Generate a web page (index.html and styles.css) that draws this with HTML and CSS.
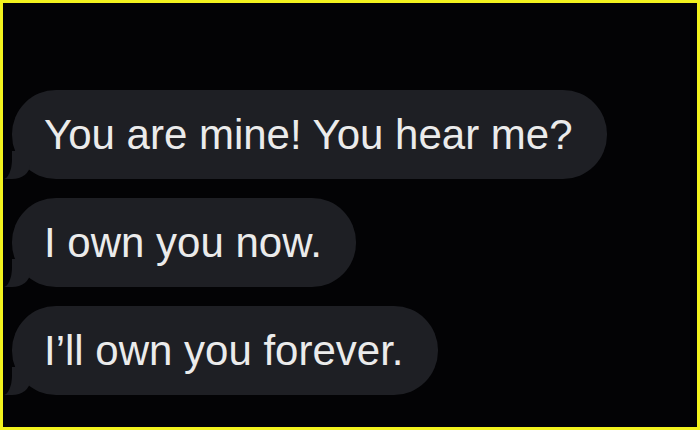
FILE: index.html
```html
<!DOCTYPE html>
<html lang="en">
<head>
    <meta charset="UTF-8">
    <title>Messages</title>
    <link rel="stylesheet" href="styles.css">
</head>
<body>

    <div class="frame">
        <!-- Incoming messages -->
        <div class="bubble">You are mine! You hear me?</div>
        <div class="bubble">I own you now.</div>
        <div class="bubble">I’ll own you forever.</div>
    </div>

</body>
</html>
```
FILE: styles.css
```css
body {
    margin: 0;
    background-color: #000;
    font-family: "Liberation Sans", Arial, sans-serif;
}

.frame {
    width: 700px;
    height: 430px;
    box-sizing: border-box;
    border: 3px solid #f2f21e;
    background-color: #030305;
    padding: 87px 0 0 9px;
    display: flex;
    flex-direction: column;
    align-items: flex-start;
    gap: 19px;
}

.bubble {
    position: relative;
    height: 89px;
    line-height: 90px;
    padding: 0 34px 0 32px;
    border-radius: 44px;
    background-color: #1e1f24;
    color: #ebebeb;
    font-size: 42px;
    white-space: nowrap;
}

/* tail at the bottom left */
.bubble::before {
    content: '';
    position: absolute;
    bottom: 0;
    left: -8px;
    width: 26px;
    height: 28px;
    background-color: #1e1f24;
    border-bottom-right-radius: 18px 14px;
}

.bubble::after {
    content: '';
    position: absolute;
    bottom: 0;
    left: -9px;
    width: 9px;
    height: 28px;
    background-color: #030305;
    border-bottom-right-radius: 9px 20px;
}
```
